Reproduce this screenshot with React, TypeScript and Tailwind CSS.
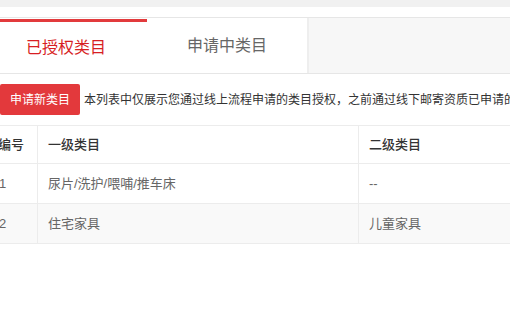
import React from 'react';

const rows = [
    { id: 1, first: '尿片/洗护/喂哺/推车床', second: '--' },
    { id: 2, first: '住宅家具', second: '儿童家具' },
];

const App: React.FC = () => {
    return (
        <div className="w-[510px] h-[319px] overflow-hidden bg-white text-[#333]" style={{ fontFamily: '"Liberation Sans", "Noto Sans CJK SC", sans-serif' }}>
            <div className="h-[7px] bg-[#f1f1f1]" />
            <div className="h-[10px] bg-white" />

            {/* tabs */}
            <div className="flex h-[57px] -ml-[15px] border-t border-b border-[#e6e6e6]">
                <div className="w-[162px] flex flex-col">
                    <div className="h-[3px] mt-px bg-[#e23a3c]" />
                    <div className="flex-1 flex items-center justify-center text-[16px] text-[#d71e23]">已授权类目</div>
                </div>
                <div className="w-[162px] flex items-center justify-center border-r-2 border-[#eeeeee] text-[16px] text-[#666]">申请中类目</div>
                <div className="flex-1 bg-[#f7f7f7]" />
            </div>

            {/* action row */}
            <div className="flex items-center mt-[10px] whitespace-nowrap">
                <button className="h-[31px] px-[10px] rounded-[2px] bg-[#e3393c] text-white text-[12px]">申请新类目</button>
                <span className="ml-[4px] text-[12px] text-[#333]">本列表中仅展示您通过线上流程申请的类目授权，之前通过线下邮寄资质已申请的类目不在此列表中展示</span>
            </div>

            {/* table */}
            <div className="mt-[10px] -ml-[12px] border-t border-[#ececec] text-[13px]">
                <div className="flex h-[38px] border-b border-[#ececec] text-[#333] font-medium">
                    <div className="w-[50px] flex items-center pl-[10px] border-r border-[#ececec]">编号</div>
                    <div className="w-[321px] flex items-center pl-[10px] border-r border-[#ececec]">一级类目</div>
                    <div className="flex-1 flex items-center pl-[10px]">二级类目</div>
                </div>
                {rows.map((r, i) => (
                    <div key={r.id} className={`flex h-[40px] border-b border-[#ececec] text-[#666] ${i % 2 === 1 ? 'bg-[#f9f9f9]' : 'bg-white'}`}>
                        <div className="w-[50px] flex items-center pl-[11px] border-r border-[#ececec]">{r.id}</div>
                        <div className="w-[321px] flex items-center pl-[10px] border-r border-[#ececec]">{r.first}</div>
                        <div className="flex-1 flex items-center pl-[10px]">{r.second}</div>
                    </div>
                ))}
            </div>
        </div>
    );
};

export default App;
